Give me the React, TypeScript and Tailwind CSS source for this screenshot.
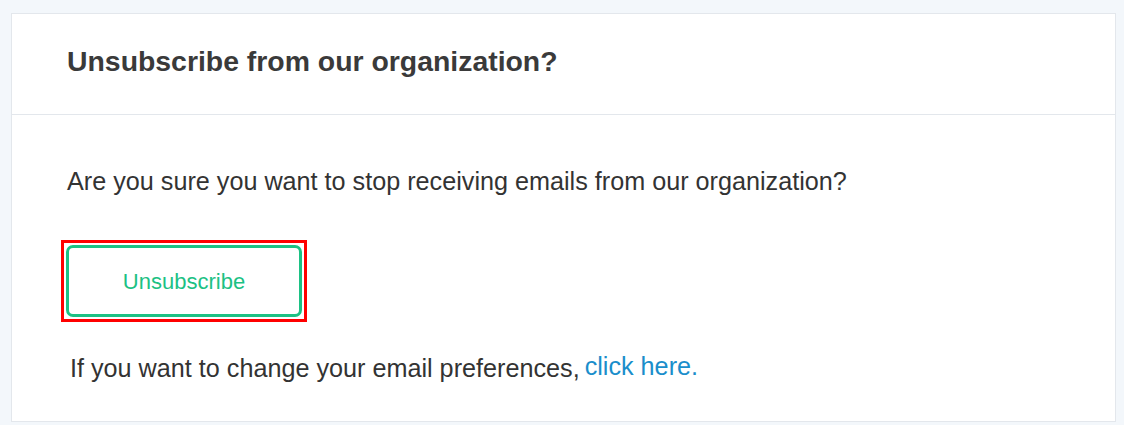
export default function App() {
  return (
    <div className="min-h-[425px] bg-[#f3f7fb] pt-[13px] pl-[11px] pr-[8px] font-['Liberation_Sans',Arial,sans-serif] text-[#333333]">
      <div className="bg-white border border-[#e3e7ec]">
        <div className="border-b border-[#e3e7ec] pl-[55px] pt-[30px] pb-[36px]">
          <h1 className="text-[28.4px] leading-[34px] font-bold text-[#3a3a3a]">
            Unsubscribe from our organization?
          </h1>
        </div>

        <div className="pl-[55px] pt-[51px] pb-[38px]">
          <p className="text-[25.2px] leading-[30px]">
            Are you sure you want to stop receiving emails from our organization?
          </p>

          {/* highlighted action */}
          <div className="mt-[44px] -ml-[6px] w-fit border-[3px] border-[#ff0000] p-[2px]">
            <button className="block w-[236px] h-[72px] rounded-[7px] border-[3px] border-[#1cc184] text-[#1cc184] text-[22px]">
              Unsubscribe
            </button>
          </div>

          <p className="mt-[31px] pl-[3px] text-[25.2px] leading-[30px]">
            If you want to change your email preferences,
            <a href="#" className="ml-[5px] text-[#1a8ecb] relative -top-[2px]">click here.</a>
          </p>
        </div>
      </div>
    </div>
  )
}
